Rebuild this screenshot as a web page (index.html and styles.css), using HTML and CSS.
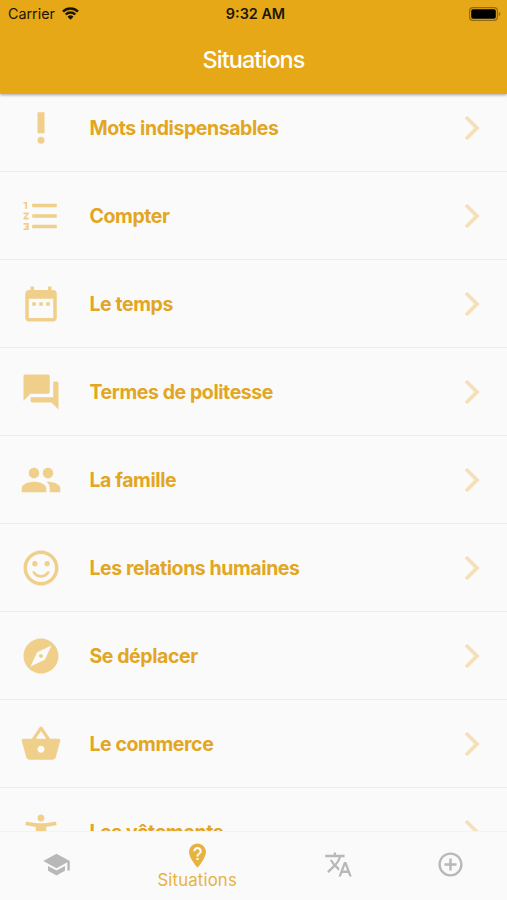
FILE: index.html
```html
<!DOCTYPE html>
<html lang="fr">
<head>
  <meta charset="UTF-8">
  <meta name="viewport" content="width=device-width, initial-scale=1">
  <title>Situations</title>
  <link rel="stylesheet" href="styles.css">
</head>
<body>

  <header>
    <div class="status">
      <div class="carrier">
        <span>Carrier</span>
        <svg class="wifi" viewBox="0 0 17 13">
          <path d="M1 4.6a10.6 10.6 0 0 1 15 0M3.7 7.5a6.8 6.8 0 0 1 9.6 0"/>
          <path class="dot" d="M8.5 12.8L5.5 9.8a4.3 4.3 0 0 1 6 0z"/>
        </svg>
      </div>
      <div class="time">9:32 AM</div>
      <div class="power">
        <svg class="battery" viewBox="0 0 32 14">
          <rect class="case" x=".6" y=".6" width="27.8" height="12.8" rx="3.4"/>
          <rect x="2.2" y="2.2" width="24.6" height="9.6" rx="1.8"/>
          <path class="tip" d="M29.8 4.8c2 .8 2 3.6 0 4.4z"/>
        </svg>
      </div>
    </div>
    <h1>Situations</h1>
  </header>

  <main>
    <ul class="list">
      <li>
        <svg class="icon" viewBox="0 0 24 24"><circle cx="12" cy="19" r="2"/><path d="M10 3h4v12h-4z"/></svg>
        <span>Mots indispensables</span>
        <svg class="arrow" viewBox="0 0 16 26"><path d="M2 2l11 11L2 24"/></svg>
      </li>
      <li>
        <svg class="icon" viewBox="0 0 24 24"><path d="M2 17h2v.5H3v1h1v.5H2v1h3v-4H2v1zm1-9h1V4H2v1h1v3zm-1 3h1.8L2 13.1v.9h3v-1H3.2L5 10.9V10H2v1zm5-6v2h14V5H7zm0 14h14v-2H7v2zm0-6h14v-2H7v2z"/></svg>
        <span>Compter</span>
        <svg class="arrow" viewBox="0 0 16 26"><path d="M2 2l11 11L2 24"/></svg>
      </li>
      <li>
        <svg class="icon" viewBox="0 0 24 24"><path d="M9 11H7v2h2v-2zm4 0h-2v2h2v-2zm4 0h-2v2h2v-2zm2-7h-1V2h-2v2H8V2H6v2H5c-1.11 0-1.99.9-1.99 2L3 20c0 1.1.89 2 2 2h14c1.1 0 2-.9 2-2V6c0-1.1-.9-2-2-2zm0 16H5V9h14v11z"/></svg>
        <span>Le temps</span>
        <svg class="arrow" viewBox="0 0 16 26"><path d="M2 2l11 11L2 24"/></svg>
      </li>
      <li>
        <svg class="icon" viewBox="0 0 24 24"><path d="M21 6h-2v9H6v2c0 .55.45 1 1 1h11l4 4V7c0-.55-.45-1-1-1zm-4 6V3c0-.55-.45-1-1-1H3c-.55 0-1 .45-1 1v14l4-4h10c.55 0 1-.45 1-1z"/></svg>
        <span>Termes de politesse</span>
        <svg class="arrow" viewBox="0 0 16 26"><path d="M2 2l11 11L2 24"/></svg>
      </li>
      <li>
        <svg class="icon" viewBox="0 0 24 24"><path d="M16 11c1.66 0 2.99-1.34 2.99-3S17.66 5 16 5c-1.66 0-3 1.34-3 3s1.34 3 3 3zm-8 0c1.66 0 2.99-1.34 2.99-3S9.66 5 8 5C6.34 5 5 6.34 5 8s1.34 3 3 3zm0 2c-2.33 0-7 1.17-7 3.5V19h14v-2.5c0-2.33-4.67-3.5-7-3.5zm8 0c-.29 0-.62.02-.97.05 1.16.84 1.97 1.97 1.97 3.45V19h6v-2.5c0-2.33-4.67-3.5-7-3.5z"/></svg>
        <span>La famille</span>
        <svg class="arrow" viewBox="0 0 16 26"><path d="M2 2l11 11L2 24"/></svg>
      </li>
      <li>
        <svg class="icon" viewBox="0 0 24 24"><circle cx="15.5" cy="9.5" r="1.5"/><circle cx="8.5" cy="9.5" r="1.5"/><path d="M12 16c-1.48 0-2.75-.81-3.45-2H6.88c.8 2.05 2.79 3.5 5.12 3.5s4.32-1.45 5.12-3.5h-1.67c-.7 1.19-1.97 2-3.45 2zm-.01-14C6.47 2 2 6.48 2 12s4.47 10 9.99 10C17.52 22 22 17.52 22 12S17.52 2 11.99 2zM12 20c-4.42 0-8-3.58-8-8s3.58-8 8-8 8 3.58 8 8-3.58 8-8 8z"/></svg>
        <span>Les relations humaines</span>
        <svg class="arrow" viewBox="0 0 16 26"><path d="M2 2l11 11L2 24"/></svg>
      </li>
      <li>
        <svg class="icon" viewBox="0 0 24 24"><path d="M12 10.9c-.61 0-1.1.49-1.1 1.1s.49 1.1 1.1 1.1c.61 0 1.1-.49 1.1-1.1s-.49-1.1-1.1-1.1zM12 2C6.48 2 2 6.48 2 12s4.48 10 10 10 10-4.48 10-10S17.52 2 12 2zm2.19 12.19L6 18l3.81-8.19L18 6l-3.81 8.19z"/></svg>
        <span>Se déplacer</span>
        <svg class="arrow" viewBox="0 0 16 26"><path d="M2 2l11 11L2 24"/></svg>
      </li>
      <li>
        <svg class="icon" viewBox="0 0 24 24"><path d="M17.21 9l-4.38-6.56c-.19-.28-.51-.42-.83-.42-.32 0-.64.14-.83.43L6.79 9H2c-.55 0-1 .45-1 1 0 .09.01.18.04.27l2.54 9.27c.23.84 1 1.46 1.92 1.46h13c.92 0 1.69-.62 1.93-1.46l2.54-9.27L23 10c0-.55-.45-1-1-1h-4.79zM9 9l3-4.4L15 9H9zm3 8c-1.1 0-2-.9-2-2s.9-2 2-2 2 .9 2 2-.9 2-2 2z"/></svg>
        <span>Le commerce</span>
        <svg class="arrow" viewBox="0 0 16 26"><path d="M2 2l11 11L2 24"/></svg>
      </li>
      <li>
        <svg class="icon" viewBox="0 0 24 24"><path d="M20.5 6c-2.61.7-5.67 1-8.5 1s-6.11-.3-8.5-1L3 8c1.86.5 4 .83 6 1v13h2v-6h2v6h2V9c2-.17 4.14-.5 6-1l-.5-2zM12 6c1.1 0 2-.9 2-2s-.9-2-2-2-2 .9-2 2 .9 2 2 2z"/></svg>
        <span>Les vêtements</span>
        <svg class="arrow" viewBox="0 0 16 26"><path d="M2 2l11 11L2 24"/></svg>
      </li>
    </ul>
  </main>

  <nav>
    <a class="tab">
      <svg viewBox="0 0 24 24"><path d="M5 13.18v4L12 21l7-3.82v-4L12 17l-7-3.82zM12 3L1 9l11 6 9-4.91V17h2V9L12 3z"/></svg>
    </a>
    <a class="tab active">
      <svg viewBox="0 0 24 24"><path d="M12 2C8.13 2 5 5.13 5 9c0 5.25 7 13 7 13s7-7.75 7-13c0-3.87-3.13-7-7-7zm.88 13.75h-1.75V14h1.75v1.75zm0-2.87h-1.75c0-2.84 2.62-2.62 2.62-4.38 0-.96-.79-1.75-1.75-1.75s-1.75.79-1.75 1.75H8.5C8.5 6.57 10.07 5 12 5s3.5 1.57 3.5 3.5c0 2.19-2.62 2.41-2.62 4.38z"/></svg>
      <span>Situations</span>
    </a>
    <a class="tab">
      <svg viewBox="0 0 24 24"><path d="M12.87 15.07l-2.54-2.51.03-.03c1.74-1.94 2.98-4.17 3.71-6.53H17V4h-7V2H8v2H1v1.99h11.17C11.5 7.92 10.44 9.75 9 11.35 8.07 10.32 7.3 9.19 6.69 8h-2c.73 1.63 1.73 3.17 2.98 4.56l-5.09 5.02L4 19l5-5 3.11 3.11.76-2.04zM18.5 10h-2L12 22h2l1.12-3h4.75L21 22h2l-4.5-12zm-2.62 7l1.62-4.33L19.12 17h-3.24z"/></svg>
    </a>
    <a class="tab">
      <svg viewBox="0 0 24 24"><path d="M13 7h-2v4H7v2h4v4h2v-4h4v-2h-4V7zm-1-5C6.48 2 2 6.48 2 12s4.48 10 10 10 10-4.48 10-10S17.52 2 12 2zm0 18c-4.41 0-8-3.59-8-8s3.59-8 8-8 8 3.59 8 8-3.59 8-8 8z"/></svg>
    </a>
  </nav>

</body>
</html>
```
FILE: styles.css
```css
* {
  box-sizing: border-box;
}

body {
  display: flex;
  flex-direction: column;
  height: 900px;
  margin: 0;
  overflow: hidden;
  font-family: Inter, "Liberation Sans", sans-serif;
  background-color: #fafafa;
}

header {
  position: relative;
  z-index: 1;
  flex: none;
  height: 94px;
  background-color: #e6a817;
  box-shadow: 0 1px 3px rgba(0, 0, 0, 0.35);
}

.status {
  display: grid;
  grid-template-columns: 1fr auto 1fr;
  align-items: center;
  height: 27px;
  padding: 0 6px 0 8px;
  color: #1c1503;
}

.carrier {
  display: flex;
  align-items: center;
  gap: 7px;
  font-size: 14.3px;
}

.wifi {
  width: 17px;
  height: 13px;
  fill: none;
  stroke: #1c1503;
  stroke-width: 2.4;
}

.wifi .dot {
  fill: #1c1503;
  stroke: none;
}

.time {
  padding-left: 2px;
  font-size: 14.4px;
  font-weight: 600;
}

.power {
  display: flex;
  justify-content: flex-end;
}

.battery {
  width: 32px;
  height: 14px;
  fill: #000;
}

.battery .case {
  fill: none;
  stroke: #8d6a16;
  stroke-width: 1.2;
}

.battery .tip {
  fill: #8d6a16;
}

h1 {
  margin: 0;
  line-height: 66px;
  font-size: 23.4px;
  font-weight: 500;
  letter-spacing: -0.9px;
  text-align: center;
  color: #fff;
}

main {
  flex: 1;
  min-height: 0;
  overflow: hidden;
}

/* the list is scrolled a little under the header */
.list {
  margin: -10px 0 0;
  padding: 0;
  list-style: none;
}

.list li {
  display: flex;
  align-items: center;
  height: 88px;
  padding: 0 27px 0 20px;
  border-bottom: 1px solid #eee;
  font-size: 19.5px;
  font-weight: 700;
  color: #e2a622;
}

.list span {
  flex: 1;
  margin-left: 27.5px;
  letter-spacing: -0.42px;
}

.icon {
  width: 42px;
  height: 42px;
  fill: #f0cf8a;
}

.arrow {
  width: 16px;
  height: 26px;
  fill: none;
  stroke: #f7dfb8;
  stroke-width: 3.6;
}

nav {
  display: flex;
  flex: none;
  height: 69px;
  border-top: 1px solid #f3f3f3;
  background-color: #fafafa;
}

.tab {
  display: flex;
  flex: 1;
  flex-direction: column;
  align-items: center;
  padding-top: 18px;
  color: #b8b8b8;
}

.tab svg {
  width: 29px;
  height: 29px;
  fill: currentColor;
}

.tab.active {
  flex: 1.5;
  padding-top: 9px;
  color: #e7b340;
}

.tab span {
  line-height: 20px;
  font-size: 16.8px;
  letter-spacing: 0.15px;
}
```
